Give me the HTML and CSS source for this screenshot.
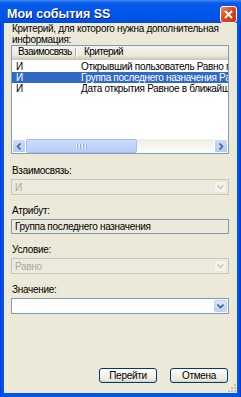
FILE: index.html
```html
<!DOCTYPE html>
<html lang="ru">
<head>
<meta charset="UTF-8">
<title>Мои события SS</title>
<link rel="stylesheet" href="styles.css">
</head>
<body>

<div class="window">
  <div class="titlebar">
    <span class="title">Мои события SS</span>
    <span class="close">
      <svg width="9" height="9" viewBox="0 0 9 9"><path d="M1 1L8 8M8 1L1 8" stroke="#fff" stroke-width="2"/></svg>
    </span>
  </div>

  <div class="body">
    <div class="caption">Критерий, для которого нужна дополнительная информация:</div>

    <div class="listview">
      <div class="lv-head">
        <div class="h1">Взаимосвязь</div>
        <div class="h2">Критерий</div>
      </div>
      <div class="lv-rows">
        <div class="row"><span class="c1">И</span><span class="c2">Открывший пользователь Равно пустому значению</span></div>
        <div class="row sel"><span class="c1">И</span><span class="c2">Группа последнего назначения Равно</span></div>
        <div class="row"><span class="c1">И</span><span class="c2">Дата открытия Равное в ближайшем месяце</span></div>
      </div>
      <div class="hscroll">
        <span class="sb-btn">
          <svg width="6" height="7" viewBox="0 0 6 7"><path d="M4.5 0.5L1.5 3.5L4.5 6.5" fill="none" stroke="#4d6185" stroke-width="1.6"/></svg>
        </span>
        <span class="sb-thumb"><i></i><i></i><i></i><i></i></span>
        <span class="sb-track"></span>
        <span class="sb-btn">
          <svg width="6" height="7" viewBox="0 0 6 7"><path d="M1.5 0.5L4.5 3.5L1.5 6.5" fill="none" stroke="#4d6185" stroke-width="1.6"/></svg>
        </span>
      </div>
    </div>

    <div class="field">
      <div class="label">Взаимосвязь:</div>
      <div class="combo disabled">
        <span class="value">И</span>
        <span class="dd"><svg width="7" height="5" viewBox="0 0 7 5"><path d="M0.5 0.5L3.5 3.5L6.5 0.5" fill="none" stroke="#c9c7ba" stroke-width="1.5"/></svg></span>
      </div>
    </div>

    <div class="field">
      <div class="label">Атрибут:</div>
      <div class="textbox">Группа последнего назначения</div>
    </div>

    <div class="field">
      <div class="label">Условие:</div>
      <div class="combo disabled">
        <span class="value">Равно</span>
        <span class="dd"><svg width="7" height="5" viewBox="0 0 7 5"><path d="M0.5 0.5L3.5 3.5L6.5 0.5" fill="none" stroke="#c9c7ba" stroke-width="1.5"/></svg></span>
      </div>
    </div>

    <div class="field">
      <div class="label">Значение:</div>
      <div class="combo">
        <span class="value"></span>
        <span class="dd"><svg width="7" height="5" viewBox="0 0 7 5"><path d="M0.5 0.5L3.5 3.5L6.5 0.5" fill="none" stroke="#4d6185" stroke-width="1.6"/></svg></span>
      </div>
    </div>

    <div class="buttons">
      <button class="btn">Перейти</button>
      <button class="btn">Отмена</button>
    </div>

    <svg class="grip" width="8" height="8" viewBox="0 0 8 8">
      <rect x="6" y="0" width="2" height="2" fill="#c5c2b2"/>
      <rect x="3" y="3" width="2" height="2" fill="#c5c2b2"/>
      <rect x="6" y="3" width="2" height="2" fill="#c5c2b2"/>
      <rect x="0" y="6" width="2" height="2" fill="#c5c2b2"/>
      <rect x="3" y="6" width="2" height="2" fill="#c5c2b2"/>
      <rect x="6" y="6" width="2" height="2" fill="#c5c2b2"/>
    </svg>
  </div>
</div>

</body>
</html>
```

FILE: styles.css
```css
:root{
  --face:#ece9d8;
  --frame:#0054e3;
  --edge:#7f9db9;
  --sel:#316ac5;
  --gray:#aca899;
}
*{box-sizing:border-box}
html,body{margin:0}
body{
  width:241px;
  height:397px;
  overflow:hidden;
  font-family:"Liberation Sans", Arial, sans-serif;
  font-size:10px;
  letter-spacing:-0.3px;
  color:#000;
  background:var(--frame);
}

/* WINDOW FRAME */
.window{
  height:397px;
  display:flex;
  flex-direction:column;
  background:linear-gradient(90deg,#0831d9 0,#0055ea 2px,#0055ea calc(100% - 2px),#0831d9 100%);
}
.titlebar{
  height:23px;
  flex:none;
  display:flex;
  align-items:center;
  padding:5px 4px 0 7px;
  background:linear-gradient(#3d8cf5 0,#0a5ae6 3px,#0058ee 40%,#0054e3 85%,#0348d8 100%);
}
.title{
  flex:1;
  color:#fff;
  font-weight:bold;
  font-size:12.5px;
  letter-spacing:0;
  text-shadow:1px 1px #0a1883;
}
.close{
  width:17px;
  height:17px;
  display:flex;
  align-items:center;
  justify-content:center;
  border:1px solid #fff;
  border-radius:3px;
  background:linear-gradient(135deg,#f08a62,#e0461f 45%,#c7330c);
}

/* DIALOG BODY */
.body{
  position:relative;
  flex:1;
  margin:0 4px 4px;
  padding:0 8px 10px 7px;
  background:var(--face);
  display:flex;
  flex-direction:column;
}
.caption{
  line-height:11px;
  padding-left:1px;
  margin-right:-6px;
}

/* LIST VIEW */
.listview{
  height:109px;
  flex:none;
  border:1px solid var(--edge);
  background:#fff;
  display:flex;
  flex-direction:column;
}
.lv-head{
  height:14px;
  flex:none;
  display:flex;
  line-height:12px;
  letter-spacing:-0.6px;
  background:linear-gradient(#f4f3ee 0,#ebeadb 70%,#d6d2c2 85%,#cbc7b8 100%);
}
.lv-head .h1{
  width:65px;
  padding-left:6px;
  position:relative;
  white-space:nowrap;
}
.lv-head .h1:after{
  content:"";
  position:absolute;
  right:0;
  top:2px;
  height:9px;
  border-left:1px solid var(--gray);
  border-right:1px solid #fff;
}
.lv-head .h2{padding-left:7px}
.lv-rows{
  flex:1;
  padding-top:1px;
  overflow:hidden;
}
.row{
  display:flex;
  height:11px;
  line-height:11px;
  white-space:nowrap;
}
.row .c1{width:65px;padding-left:4px;flex:none}
.row .c2{flex:1;padding-left:4px;overflow:hidden}
.row.sel{background:var(--sel);color:#fff}

/* SCROLL BAR */
.hscroll{
  height:14px;
  flex:none;
  display:flex;
  background:linear-gradient(#eeede5,#fdfdfa);
}
.sb-btn{
  width:14px;
  flex:none;
  display:flex;
  align-items:center;
  justify-content:center;
  border:1px solid #fff;
  border-radius:2px;
  background:linear-gradient(#cddbfc,#b4c8f6);
}
.sb-thumb{
  width:111px;
  flex:none;
  display:flex;
  align-items:center;
  justify-content:center;
  gap:1px;
  border:1px solid #fff;
  outline:1px solid #a9bde9;
  outline-offset:-1px;
  border-radius:2px;
  background:linear-gradient(#cbdafc,#b9cdfa);
}
.sb-thumb i{
  width:1px;
  height:5px;
  background:#eef3fe;
  box-shadow:1px 0 #8cb0f8;
  margin-right:1px;
}
.sb-track{flex:1}

/* FIELDS */
.field{margin-top:11px}
.field + .field{margin-top:10px}
.label{
  line-height:11px;
  height:11px;
  margin-bottom:3px;
  padding-left:1px;
}
.combo{
  height:16px;
  display:flex;
  align-items:center;
  border:1px solid var(--edge);
  background:#fff;
  padding:1px;
}
.combo .value{flex:1;padding-left:2px}
.combo .dd{
  width:13px;
  height:12px;
  display:flex;
  align-items:center;
  justify-content:center;
  border:1px solid #b9cdf6;
  border-radius:2px;
  background:linear-gradient(#dce6fe,#bccffa);
}
.combo.disabled{
  border-color:#c9c7ba;
  background:#ebeadf;
  color:var(--gray);
}
.combo.disabled .dd{
  border-color:#e8e6dc;
  background:#f3f2ec;
}
.textbox{
  height:15px;
  line-height:13px;
  border:1px solid var(--edge);
  padding-left:3px;
}

/* BUTTONS */
.buttons{
  margin-top:auto;
  display:flex;
  justify-content:flex-end;
  gap:13px;
  padding-right:1px;
}
.btn{
  width:58px;
  height:15px;
  padding:0;
  font:inherit;
  letter-spacing:inherit;
  color:#000;
  border:1px solid #003c74;
  border-radius:3px;
  background:linear-gradient(#fff 0,#f3f2ec 40%,#ece9d8 85%,#d6d0c5 100%);
}
.grip{
  position:absolute;
  right:1px;
  bottom:1px;
}
```
